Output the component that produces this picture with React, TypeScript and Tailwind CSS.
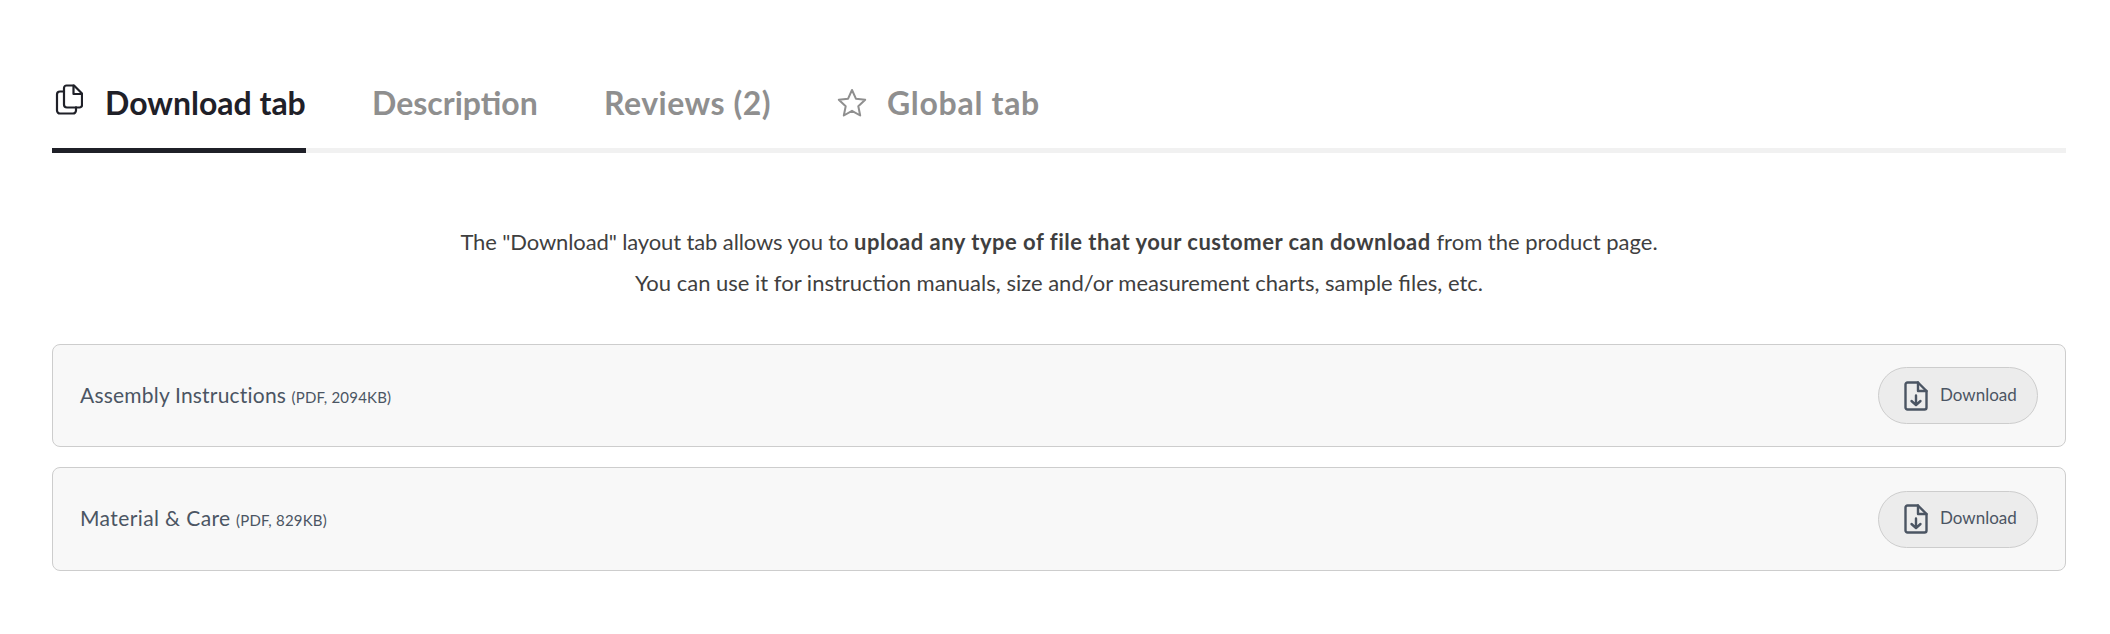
import React from "react";

const font = { fontFamily: "Lato, 'Noto Sans', sans-serif" };

function CopyIcon() {
  return (
    <svg width="28" height="32" viewBox="0 0 28 32" fill="none" stroke="#1f2028" strokeWidth="2.200" strokeLinejoin="round" strokeLinecap="round" className="shrink-0 mb-[6px]">
      <path d="M9 7.500V4a2.500 2.500 0 0 1 2.500-2.500H19l8 8V21a2.500 2.500 0 0 1-2.500 2.500H21" />
      <path d="M18.500 1.500V10H27" />
      <path d="M9 7.500H5a3 3 0 0 0-3 3v16a3 3 0 0 0 3 3h13a3 3 0 0 0 3-3v-3" />
      <path d="M9 7.500v13a3 3 0 0 0 3 3h9" />
    </svg>
  );
}

function StarIcon() {
  return (
    <svg width="30" height="30" viewBox="0 0 30 30" fill="none" stroke="#8f8f8f" strokeWidth="2" strokeLinejoin="round" className="shrink-0">
      <path d="M15 2l3.900 8.700 9.300 1.100-6.900 6.400 1.900 9.300-8.200-4.700-8.200 4.700 1.900-9.300-6.900-6.400 9.300-1.100z" />
    </svg>
  );
}

function FileDownIcon() {
  return (
    <svg width="24" height="30" viewBox="0 0 24 30" fill="none" stroke="#4b5563" strokeWidth="2.400" strokeLinejoin="round" strokeLinecap="round" className="shrink-0">
      <path d="M3.500 1.500h10.500l8.500 8.500v16.500a2 2 0 0 1-2 2H3.500a2 2 0 0 1-2-2v-23a2 2 0 0 1 2-2z" />
      <path d="M14 1.500V10h8.500" />
      <path d="M12 14.500v9M7.500 20l4.500 4 4.500-4" />
    </svg>
  );
}

function Row({ name, meta, nameClass, heightClass }: { name: string; meta: string; nameClass: string; heightClass: string }) {
  return (
    <div className={`flex items-center justify-between ${heightClass} pl-[27px] pr-[27px] bg-[#f8f8f8] border border-[#cdcdcd] rounded-lg`}>
      <div className="text-[#4b5563] text-[21px] pb-[2px]">
        <span className={nameClass}>{name}</span>{" "}
        <span className="text-[15px] tracking-[0.2px]">{meta}</span>
      </div>
      <button className="flex items-center gap-[11px] w-[160px] h-[57px] pl-[25px] bg-[#ececec] border border-[#cdcdcd] rounded-full text-[#4b5563] text-[17px]">
        <FileDownIcon />
        <span className="ml-[1px] mb-[2px]">Download</span>
      </button>
    </div>
  );
}

export default function App() {
  return (
    <div style={font} className="bg-white w-[2110px] h-[634px] pt-[72px] pl-[52px] pr-[44px]">
      <div className="flex h-[81px] border-b-[5px] border-[#f1f1f1] text-[32px] font-bold text-[#8f8f8f]">
        <div className="flex items-center gap-[22px] h-[81px] w-[254px] border-b-[5px] border-[#1f2028] pb-[14px] text-[#1f2028] pl-[3px] whitespace-nowrap">
          <CopyIcon />
          <span>Download tab</span>
        </div>
        <div className="flex items-center h-[76px] pb-[14px] ml-[66px] w-[165px] whitespace-nowrap">Description</div>
        <div className="flex items-center h-[76px] pb-[14px] ml-[67px] w-[167px] tracking-[0.5px] whitespace-nowrap">Reviews (2)</div>
        <div className="flex items-center gap-[20px] h-[76px] pb-[14px] ml-[66px] whitespace-nowrap">
          <StarIcon />
          <span className="tracking-[0.7px]">Global tab</span>
        </div>
      </div>
      <div className="mt-[68px] text-center text-[#3f3f3f] text-[22px] leading-[41px]">
        <p>
          <span className="tracking-[-0.12px]">The "Download" layout tab allows you to</span> <strong className="font-bold tracking-[0.5px]">upload any type of file that your customer can download</strong> from the product page.
        </p>
        <p>You can use it for instruction manuals, size and/or measurement charts, sample files, etc.</p>
      </div>
      <div className="mt-[41px] flex flex-col gap-[20px]">
        <Row name="Assembly Instructions" meta="(PDF, 2094KB)" nameClass="tracking-[0.2px]" heightClass="h-[103px]" />
        <Row name="Material & Care" meta="(PDF, 829KB)" nameClass="tracking-[0.4px]" heightClass="h-[104px]" />
      </div>
    </div>
  );
}
